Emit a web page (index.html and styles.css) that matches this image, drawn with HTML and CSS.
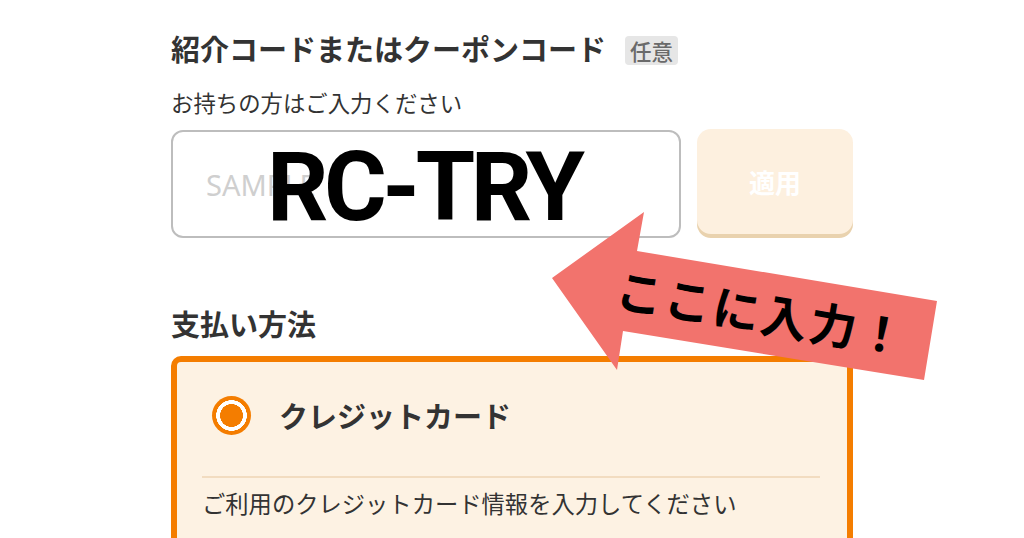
FILE: index.html
```html
<!DOCTYPE html>
<html lang="ja">
<head>
<meta charset="utf-8">
<link rel="stylesheet" href="styles.css">
</head>
<body>
<div class="page">
  <main class="form">
    <div class="title-row">
      <h2 class="title">紹介コードまたはクーポンコード</h2>
      <span class="badge">任意</span>
    </div>
    <p class="sub">お持ちの方はご入力ください</p>
    <div class="code-row">
      <input class="code-input" type="text" placeholder="SAMPLE">
      <button class="apply" type="button">適用</button>
    </div>

    <h2 class="title pay-title">支払い方法</h2>
    <section class="card">
      <div class="radio-row">
        <span class="radio"></span>
        <span class="radio-label">クレジットカード</span>
      </div>
      <div class="divider"></div>
      <p class="desc">ご利用のクレジットカード情報を入力してください</p>
    </section>
  </main>

  <div class="code-overlay">RC-TRY</div>

  <svg class="arrow" width="1024" height="538" viewBox="0 0 1024 538">
    <polygon points="552,278 644,212 637,251 937,301 924,380 623,331 617,370" fill="#f2736d"/>
    <text x="762" y="311" transform="rotate(9.5 762 311)" text-anchor="middle" dominant-baseline="central" class="arrow-text">ここに入力！</text>
  </svg>
</div>
</body>
</html>
```

FILE: styles.css
```css
* { box-sizing: border-box; }
html, body { margin: 0; padding: 0; background: #fff; }
body {
  font-family: "Noto Sans CJK JP", "Noto Sans", sans-serif;
  color: #333;
  width: 1024px;
  height: 538px;
  overflow: hidden;
}
.page { position: relative; width: 1024px; height: 538px; }

.form {
  padding: 30px 0 0 171px;
  width: 853px;
}

.title-row {
  display: flex;
  align-items: center;
  gap: 19px;
}
.title {
  margin: 0;
  font-size: 29px;
  line-height: 34px;
  font-weight: 700;
  color: #333;
}
.badge {
  margin-top: 6px;
  height: 29px;
  line-height: 29px;
  padding: 0 5px;
  border-radius: 4px;
  background: #e6e6e6;
  color: #6a6a6a;
  font-size: 21.5px;
  font-weight: 500;
}
.sub {
  margin: 22px 0 0;
  font-size: 22.4px;
  line-height: 30px;
  font-weight: 400;
  color: #333;
}

.code-row {
  display: flex;
  align-items: flex-start;
  gap: 16px;
  margin-top: 13px;
}
.code-input {
  width: 510px;
  height: 108px;
  border: 2px solid #bdbdbd;
  border-radius: 12px;
  padding: 0 0 0 33px;
  font-family: "Noto Sans", sans-serif;
  font-size: 29px;
  color: #333;
  background: #fff;
  outline: none;
}
.code-input::placeholder { color: #cfcfcf; }
.apply {
  width: 156px;
  height: 105px;
  margin-top: -1px;
  border: none;
  border-radius: 14px;
  background: #fdf0df;
  box-shadow: 0 4px 0 #e9d2ae;
  color: #fff;
  font-family: "Noto Sans CJK JP", sans-serif;
  font-size: 26px;
  font-weight: 700;
}

.pay-title { margin-top: 68px; }

.card {
  margin-top: 16px;
  width: 682px;
  height: 200px;
  border: 6px solid #f47d00;
  border-radius: 10px;
  background: #fdf2e3;
  padding: 34px 27px 0 25px;
}
.radio-row {
  display: flex;
  align-items: center;
  gap: 28px;
  padding-left: 10px;
}
.radio {
  width: 39px;
  height: 39px;
  border-radius: 50%;
  flex: none;
  background: radial-gradient(circle closest-side, #f47d00 0 58%, #fff 59% 78%, #f47d00 79%);
}
.radio-label {
  font-size: 29px;
  line-height: 39px;
  font-weight: 700;
  color: #333;
}
.divider {
  margin-top: 41px;
  height: 2px;
  background: #f2dcc0;
}
.desc {
  margin: 9px 0 0;
  font-size: 23.3px;
  line-height: 32px;
  color: #333;
}

.code-overlay {
  position: absolute;
  left: 267px;
  top: 139px;
  font-family: Roboto, "Liberation Sans", sans-serif;
  font-weight: 700;
  font-size: 96px;
  line-height: 96px;
  letter-spacing: -4.5px;
  color: #000;
}

.arrow {
  position: absolute;
  left: 0;
  top: 0;
  pointer-events: none;
}
.arrow-text {
  font-family: "Noto Sans CJK JP", sans-serif;
  font-weight: 700;
  font-size: 47px;
  letter-spacing: 2px;
  fill: #000;
}
```
